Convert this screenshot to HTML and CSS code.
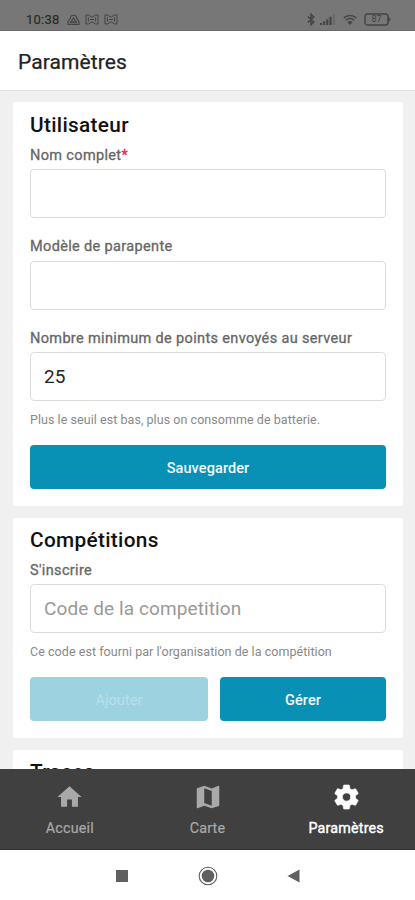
FILE: index.html
```html
<!DOCTYPE html>
<html lang="fr">
<head>
<meta charset="utf-8">
<meta name="viewport" content="width=device-width, initial-scale=1">
<title>Paramètres</title>
<link rel="stylesheet" href="styles.css">
</head>
<body>
<div class="screen">
  <div class="status">
    <span class="clock">10:38</span>
    <svg class="notif-drive" width="13" height="12" viewBox="0 0 13 12" fill="none" stroke="currentColor" stroke-width="1.1"><path d="M3.300 4.500a3.200 3.200 0 0 1 6.400 0L12 7.500v3H1v-3zM3.200 8.700l3.300-4.700 3.300 4.700zM5.200 7.200h2.600"/></svg>
    <svg class="notif" width="14" height="11" viewBox="0 0 14 11" fill="none" stroke="currentColor" stroke-width="1"><path d="M1 1h2.400L7 3.200 10.600 1H13v9h-2.400L7 7.800 3.400 10H1zM3.400 3.500v4M10.600 3.500v4M5 5.500h4"/></svg>
    <svg class="notif" width="14" height="11" viewBox="0 0 14 11" fill="none" stroke="currentColor" stroke-width="1"><path d="M1 1h2.400L7 3.200 10.600 1H13v9h-2.400L7 7.800 3.400 10H1zM3.400 3.500v4M10.600 3.500v4M5 5.500h4"/></svg>
    <span class="spacer"></span>
    <svg class="bluetooth" width="8" height="13" viewBox="0 0 8 13" fill="none" stroke="currentColor" stroke-width="1.500"><path d="M.8 3.500l6 5.500L4 11.700V1.300L6.800 4l-6 5.500"/></svg>
    <svg class="signal" width="16" height="11" viewBox="0 0 16 11" fill="currentColor"><path d="M0 9h2v2H0zM3.200 7.300h2V11h-2zM6.300 5.300h2V11h-2zM9.400 2.800h2.200V11H9.400z"/><path d="M13 .5h1.800V11H13z" opacity=".3"/></svg>
    <svg class="wifi" width="14" height="12" viewBox="0 0 14 12" fill="none" stroke="currentColor" stroke-width="1.500"><path d="M.8 3.900a9 9 0 0 1 12.400 0M2.900 6.200a6 6 0 0 1 8.200 0"/><path d="M4.500 8.200a3.700 3.700 0 0 1 5 0L7 11z" fill="currentColor" stroke="none"/></svg>
    <span class="battery"><svg width="27" height="13" viewBox="0 0 27 13" fill="none" stroke="currentColor" stroke-width="1.400"><path d="M3.500 1h18a2.500 2.500 0 0 1 2.500 2.500v6a2.500 2.500 0 0 1-2.500 2.500h-18A2.500 2.500 0 0 1 1 9.500v-6A2.500 2.500 0 0 1 3.500 1z"/><path d="M24 3v7l2.700-3.500z" fill="currentColor" stroke="none"/></svg><span class="level">87</span></span>
  </div>
  <header class="header"><h1>Paramètres</h1></header>
  <main class="content">
    <section class="card user">
      <h2 class="t-user">Utilisateur</h2>
      <label class="l-name">Nom complet<b>*</b></label>
      <div class="field"></div>
      <label class="l-model">Modèle de parapente</label>
      <div class="field"></div>
      <label class="l-points">Nombre minimum de points envoyés au serveur</label>
      <div class="field"><span class="value">25</span></div>
      <p class="hint h-battery">Plus le seuil est bas, plus on consomme de batterie.</p>
      <div class="actions"><button class="save">Sauvegarder</button></div>
    </section>
    <section class="card comp">
      <h2 class="t-comp">Compétitions</h2>
      <label class="l-join">S'inscrire</label>
      <div class="field"><span class="placeholder">Code de la competition</span></div>
      <p class="hint h-code">Ce code est fourni par l'organisation de la compétition</p>
      <div class="actions"><button class="add" disabled>Ajouter</button><button class="manage">Gérer</button></div>
    </section>
    <section class="card traces"><h2 class="t-traces">Traces</h2></section>
  </main>
  <nav class="tabs">
    <a class="tab home"><svg width="29" height="29" viewBox="0 0 24 24" fill="currentColor"><path d="M10 20v-6h4v6h5v-8h3L12 3 2 12h3v8z"/></svg><span>Accueil</span></a>
    <a class="tab map"><svg width="30" height="30" viewBox="0 0 24 24" fill="currentColor"><path d="M20.500 3l-.16.030L15 5.100 9 3 3.360 4.900c-.21.070-.36.250-.36.480V20.500c0 .28.220.5.500.5l.16-.030L9 18.900l6 2.100 5.640-1.900c.21-.070.36-.25.360-.48V3.500c0-.28-.22-.5-.5-.5zM15 19l-6-2.110V5l6 2.110V19z"/></svg><span>Carte</span></a>
    <a class="tab settings"><svg width="31" height="31" viewBox="0 0 24 24" fill="currentColor"><path d="M19.140 12.940c.04-.3.060-.61.060-.94 0-.32-.02-.64-.07-.94l2.030-1.580c.18-.14.230-.41.120-.61l-1.920-3.320c-.12-.22-.37-.29-.59-.22l-2.390.96c-.5-.38-1.030-.7-1.620-.94l-.36-2.540c-.04-.24-.24-.41-.48-.41h-3.840c-.24 0-.43.170-.47.410l-.36 2.540c-.59.240-1.130.57-1.620.94l-2.390-.96c-.22-.08-.47 0-.59.220L2.740 8.870c-.12.210-.08.470.12.610l2.030 1.580c-.05.300-.09.630-.09.940s.02.640.07.940l-2.030 1.580c-.18.140-.23.410-.12.610l1.920 3.320c.12.220.37.290.59.220l2.390-.96c.5.380 1.030.7 1.620.94l.36 2.540c.05.240.24.410.48.410h3.840c.24 0 .44-.17.470-.41l.36-2.540c.59-.24 1.130-.56 1.620-.94l2.390.96c.22.080.47 0 .59-.22l1.920-3.320c.12-.22.070-.47-.12-.61l-2.010-1.580zM12 15.300A3.300 3.300 0 1 1 12 8.700a3.300 3.300 0 0 1 0 6.600z" stroke="currentColor" stroke-width=".5"/></svg><span>Paramètres</span></a>
  </nav>
  <div class="system">
    <svg width="14" height="14" viewBox="0 0 14 14"><path d="M1 1h12v12H1z" fill="currentColor"/></svg>
    <svg width="20" height="20" viewBox="0 0 20 20"><circle cx="10" cy="10" r="8.800" fill="none" stroke="currentColor" stroke-width="1.100"/><circle cx="10" cy="10" r="6.300" fill="currentColor"/></svg>
    <svg width="14" height="14" viewBox="0 0 14 14"><path d="M12.500 .5v13L.5 7z" fill="currentColor"/></svg>
  </div>
</div>
</body>
</html>
```

FILE: styles.css
```css
* { box-sizing: border-box; }
body { margin: 0; font-family: Roboto, "Liberation Sans", sans-serif; background: #fff; }
h1, h2, p { margin: 0; }
svg { display: block; flex: none; }
.screen { width: 415px; height: 900px; display: flex; flex-direction: column; overflow: hidden; }
.status { height: 31px; flex: none; background: #777; border-bottom: 1px solid #696969; color: #444; display: flex; align-items: center; padding: 9px 24px 0 26px; }
.clock { font-size: 13px; font-weight: 400; -webkit-text-stroke: .2px #2b2b2b; line-height: 20px; letter-spacing: .25px; color: #2b2b2b; }
.notif-drive { margin-left: 7px; }
.notif { margin-left: 5px; }
.spacer { flex: 1; }
.signal { margin-left: 5px; }
.wifi { margin-left: 7px; }
.battery { position: relative; margin-left: 7px; }
.level { position: absolute; left: 0; top: 0; width: 25px; line-height: 13px; font-size: 9px; text-align: center; }
.header { height: 60px; flex: none; background: #fff; border-bottom: 1px solid #e2e2e2; display: flex; align-items: center; padding: 2px 18px 0; }
h1 { font-size: 21px; font-weight: 400; -webkit-text-stroke: .25px #222; line-height: 30px; color: #222; letter-spacing: .1px; white-space: nowrap; }
.content { height: 678px; flex: none; overflow: hidden; background: #f0f0f0; padding: 11px 12px 0 13px; display: flex; flex-direction: column; gap: 12px; }
.card { flex: none; background: #fff; border-radius: 3px; padding: 10px 17px 0; }
.user { height: 404px; }
.comp { height: 220px; padding-top: 9px; }
.traces { height: 160px; padding-top: 9px; }
h2 { font-size: 20.800px; line-height: 26px; font-weight: 500; color: #111; white-space: nowrap; letter-spacing: .32px; }
label { display: block; height: 31px; line-height: 35px; font-size: 14.500px; font-weight: 400; -webkit-text-stroke: .3px currentColor; color: #666; white-space: nowrap; letter-spacing: .35px; }
label b { color: #e52440; font-weight: 400; }
.field { height: 49px; border: 1px solid #dcdcdc; border-radius: 4px; display: flex; align-items: center; padding: 0 13px; font-size: 19px; white-space: nowrap; }
.field + label { height: 42.500px; line-height: 20px; padding-top: 19px; }
.value { color: #252525; letter-spacing: .1px; }
.placeholder { color: #999; letter-spacing: .1px; }
.hint { height: 44px; line-height: 37px; font-size: 12.500px; color: #888; white-space: nowrap; letter-spacing: .05px; }
.actions { display: flex; gap: 12px; }
button { font-family: inherit; height: 44px; border: 0; border-radius: 4px; padding: 3px 0 0; background: #0891b5; color: #f4fbfd; font-size: 14.500px; font-weight: 500; letter-spacing: .1px; }
.save { flex: 1; }
.add { width: 178px; background: #9dd3e0; color: #b9e0e9; font-weight: 400; }
.manage { flex: 1; }
.tabs { height: 81px; flex: none; background: #404040; border-bottom: 1px solid #333; display: flex; }
.tab { flex: 1; display: flex; flex-direction: column; align-items: center; padding-top: 13px; color: #a9a9a9; font-size: 14.300px; white-space: nowrap; }
.tab svg { height: 30px; }
.tab span { line-height: 20px; margin-top: 6px; font-weight: 400; -webkit-text-stroke: .2px currentColor; letter-spacing: .2px; }
.tab.home, .tab.settings { padding-left: 1px; }
.tab.settings { color: #fff; }
.tab.settings span { -webkit-text-stroke: .4px currentColor; }
.system { height: 50px; flex: none; background: #fff; color: #606060; display: flex; align-items: center; justify-content: center; gap: 69px; padding-top: 1px; }
```
